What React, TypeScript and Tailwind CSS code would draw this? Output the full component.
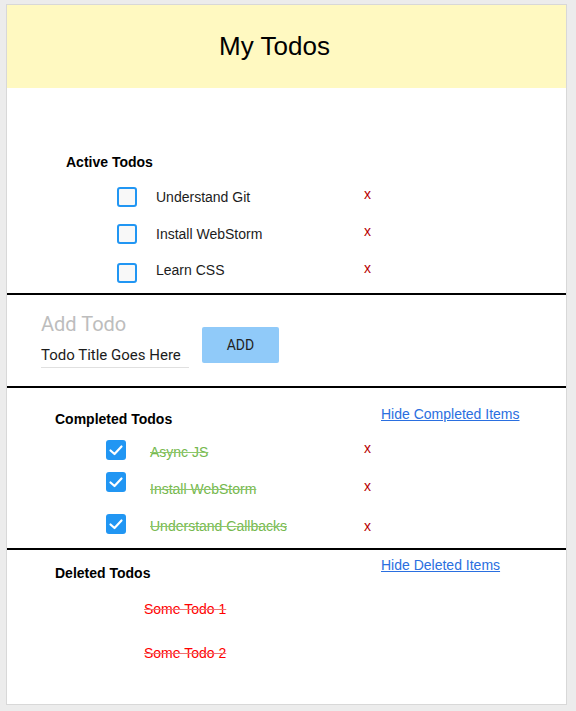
import React from "react";

const arial = { fontFamily: '"Liberation Sans", Arial, sans-serif' };

function Unchecked({ mt }: { mt: string }) {
  return (
    <div className={`w-[20px] h-[20px] shrink-0 rounded-[3px] border-2 border-[#2196f3] bg-[#f8f8f8] ${mt}`} />
  );
}

function Checked({ mt }: { mt: string }) {
  return (
    <div className={`w-[20px] h-[20px] shrink-0 rounded-[3px] bg-[#2196f3] flex items-center justify-center ${mt}`}>
      <svg width="20" height="20" viewBox="0 0 20 20">
        <polyline points="4.5,10.5 8.5,14 15.5,6.5" fill="none" stroke="#fff" strokeWidth="2.2" strokeLinecap="round" strokeLinejoin="round" />
      </svg>
    </div>
  );
}

function Xmark({ mt }: { mt: string }) {
  return <span className={`block h-[20px] leading-[20px] text-[14px] text-[#b80000] ${mt}`}>x</span>;
}

export default function App() {
  return (
    <div className="min-h-screen bg-[#ececec] pt-[4px] pl-[6px]" style={arial}>
      <div className="w-[561px] h-[701px] bg-white border border-[#d8d8d8] flex flex-col">
        {/* Header */}
        <div className="h-[83px] shrink-0 bg-[#fff9c1] flex items-center justify-center pr-[24px]">
          <h1 className="text-[26px] text-black font-normal">My Todos</h1>
        </div>

        {/* Active */}
        <div className="h-[205px] shrink-0 pt-[64px]">
          <div className="pl-[59px] h-[20px] leading-[20px] text-[14px] font-bold text-black">Active Todos</div>
          <div className="mt-[8px] flex flex-col">
            {[
              { t: "Understand Git", cb: "mt-[7px]", tx: "mt-[7px]" },
              { t: "Install WebStorm", cb: "mt-[7px]", tx: "mt-[7px]" },
              { t: "Learn CSS", cb: "mt-[9px]", tx: "mt-[6px]" },
            ].map((r) => (
              <div key={r.t} className="h-[37px] flex items-start pl-[110px]">
                <Unchecked mt={r.cb} />
                <span className={`ml-[19px] w-[208px] h-[20px] leading-[20px] text-[14px] text-[#1c1c1c] ${r.tx}`}>{r.t}</span>
                <Xmark mt="mt-[4px]" />
              </div>
            ))}
          </div>
        </div>

        {/* Add Todo */}
        <div className="h-[93px] shrink-0 border-t-2 border-black flex items-start pl-[34px] pt-[18px]" style={{ fontFamily: 'Roboto, "Liberation Sans", sans-serif' }}>
          <div className="w-[148px] flex flex-col">
            <span className="h-[22px] leading-[22px] text-[20px] text-[#bdbdbd]">Add Todo</span>
            <span className="mt-[10px] h-[20px] leading-[20px] text-[15px] text-[#1c1c1c]">Todo Title Goes Here</span>
            <div className="mt-[2px] h-[1px] bg-[#e0e0e0]" />
          </div>
          <button className="ml-[13px] mt-[14px] w-[77px] h-[36px] rounded-[2px] bg-[#90caf9] text-[14px] text-[#222] flex items-center justify-center">
            ADD
          </button>
        </div>

        {/* Completed */}
        <div className="h-[162px] shrink-0 border-t-2 border-black pt-[16px]">
          <div className="flex items-start h-[25px]">
            <span className="ml-[48px] mt-[5px] w-[326px] h-[20px] leading-[20px] text-[14px] font-bold text-black">Completed Todos</span>
            <a href="#" className="h-[20px] leading-[20px] text-[14px] text-[#2a6fe0] underline">Hide Completed Items</a>
          </div>
          <div className="mt-[6px] flex flex-col">
            {[
              { t: "Async JS", cb: "mt-[5px]", tx: "mt-[7px]", x: "mt-[3px]" },
              { t: "Install WebStorm", cb: "mt-[0px]", tx: "mt-[7px]", x: "mt-[4px]" },
              { t: "Understand Callbacks", cb: "mt-[5px]", tx: "mt-[7px]", x: "mt-[7px]" },
            ].map((r) => (
              <div key={r.t} className="h-[37px] flex items-start pl-[99px]">
                <Checked mt={r.cb} />
                <span className={`ml-[24px] w-[214px] h-[20px] leading-[20px] text-[14px] text-[#76b84e] line-through decoration-[#8cc76a] ${r.tx}`}>{r.t}</span>
                <Xmark mt={r.x} />
              </div>
            ))}
          </div>
        </div>

        {/* Deleted */}
        <div className="flex-1 border-t-2 border-black pt-[5px]">
          <div className="flex items-start h-[28px]">
            <span className="ml-[48px] mt-[8px] w-[326px] h-[20px] leading-[20px] text-[14px] font-bold text-black">Deleted Todos</span>
            <a href="#" className="h-[20px] leading-[20px] text-[14px] text-[#2a6fe0] underline">Hide Deleted Items</a>
          </div>
          <div className="pl-[137px] flex flex-col">
            <span className="mt-[16px] h-[20px] leading-[20px] text-[14px] text-[#f00] line-through decoration-[#f07070]">Some Todo 1</span>
            <span className="mt-[24px] h-[20px] leading-[20px] text-[14px] text-[#f00] line-through decoration-[#f07070]">Some Todo 2</span>
          </div>
        </div>
      </div>
    </div>
  );
}
